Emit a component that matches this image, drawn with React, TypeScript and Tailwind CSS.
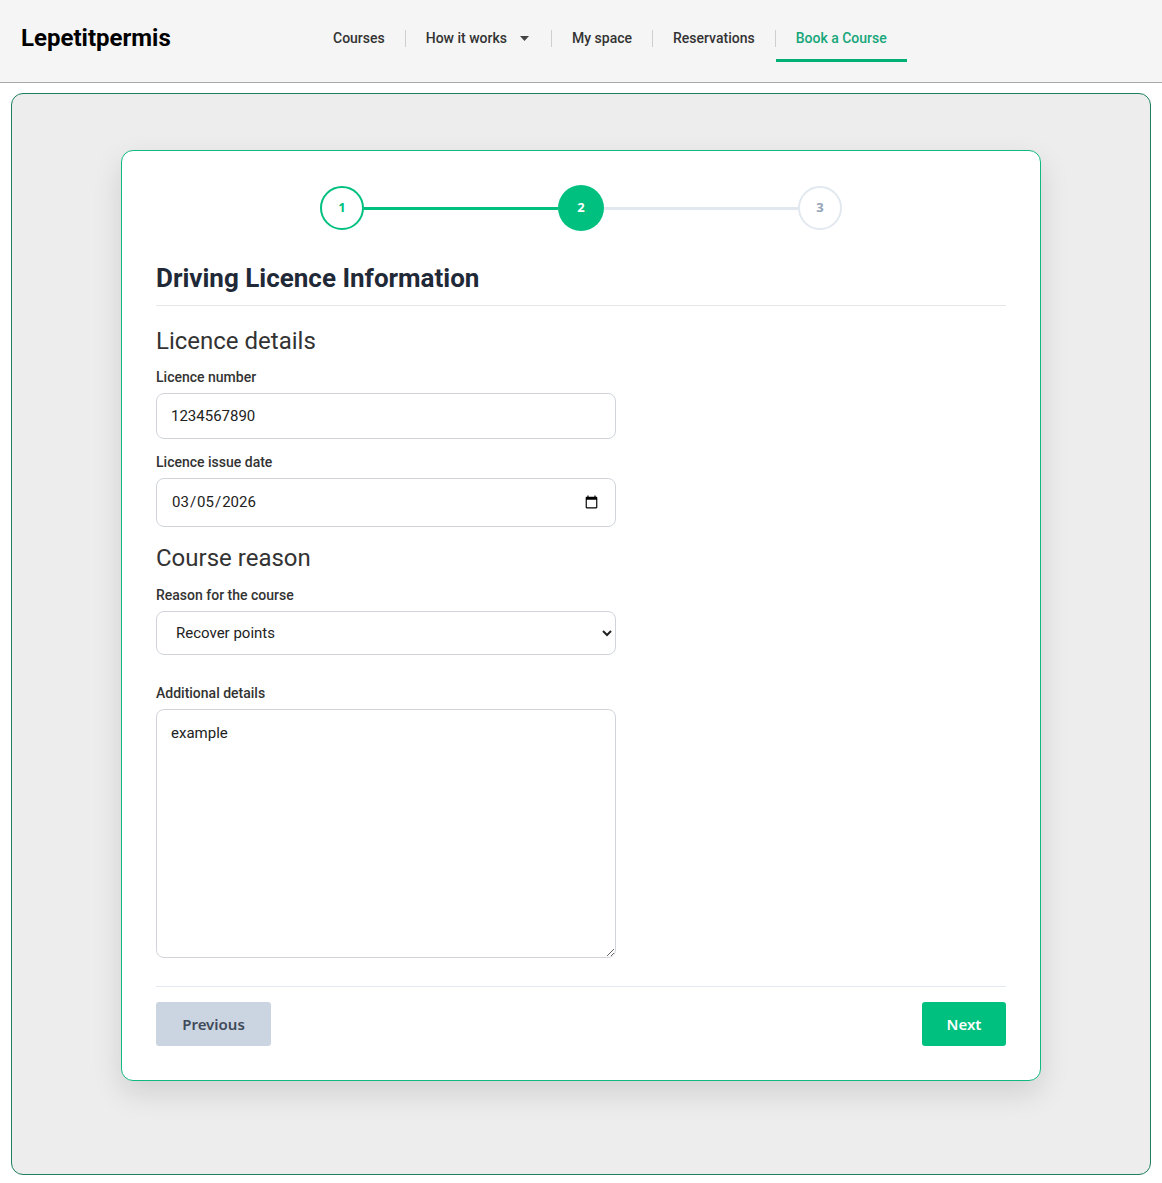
import { useState } from 'react'

const navItems = ['Courses', 'How it works', 'My space', 'Reservations']

function Stepper() {
  return (
    <div className="flex items-center justify-center">
      <div className="flex h-[44px] w-[44px] items-center justify-center rounded-full border-2 border-[#00c07f] bg-white font-['Noto_Sans',sans-serif] text-[13px] font-bold text-[#00c07f]">
        1
      </div>
      <div className="h-[3px] w-[194px] bg-[#00c07f]" />
      <div className="flex h-[46px] w-[46px] items-center justify-center rounded-full bg-[#00c07f] font-['Noto_Sans',sans-serif] text-[13px] font-bold text-white">
        2
      </div>
      <div className="h-[3px] w-[194px] bg-[#e2e8f0]" />
      <div className="flex h-[44px] w-[44px] items-center justify-center rounded-full border-2 border-[#e2e8f0] bg-white font-['Noto_Sans',sans-serif] text-[13px] font-bold text-[#94a3b8]">
        3
      </div>
    </div>
  )
}

export default function App() {
  const [form, setForm] = useState({
    number: '1234567890',
    date: '2026-03-05',
    reason: 'recover',
    details: 'example'
  })

  const inputCls =
    'w-full rounded-lg border border-[#d1d5db] bg-white px-[14px] text-[15px] text-[#222] focus:outline-none'
  const labelCls = 'block text-[14px] font-medium leading-[17px] text-[#333]'

  return (
    <div className="min-h-screen bg-white font-['Roboto',sans-serif]">
      {/* Header */}
      <header className="flex h-[83px] items-start border-b border-[#a8a8a8] bg-[#f5f5f5] pl-[21px] pt-[24px]">
        <div className="w-[292px] text-[24px] font-bold leading-[28px] text-black">Lepetitpermis</div>
        <nav className="flex items-start pt-[6px]">
          {navItems.map((item) => (
            <div key={item} className="flex items-center">
              <span className="flex items-center px-[20px] text-[14px] font-medium leading-[17px] text-[#333]">
                {item}
                {item === 'How it works' && (
                  <svg className="ml-[13px] mr-[2px]" width="9" height="5" viewBox="0 0 9 5">
                    <path d="M0 0h9L4.5 5z" fill="#444" />
                  </svg>
                )}
              </span>
              <span className="h-[17px] w-px bg-[#cfcfcf]" />
            </div>
          ))}
          <span className="border-b-[3px] border-[#00b074] px-[20px] pb-[12px] text-[14px] font-medium leading-[17px] text-[#16a67a]">
            Book a Course
          </span>
        </nav>
      </header>

      {/* Main */}
      <main className="px-[11px] pb-[7px] pt-[10px]">
        <div className="rounded-[12px] border border-[#1f7f5a] bg-[#ededed] px-[109px] pb-[93px] pt-[56px]">
          <div className="rounded-[12px] border border-[#10b981] bg-white px-[34px] pb-[34px] pt-[34px] shadow-[0_12px_30px_rgba(0,0,0,0.12)]">
            <Stepper />

            <h1 className="mt-[32px] border-b border-[#e5e7eb] pb-[11px] text-[26px] font-bold leading-[31px] text-[#1f2937]">
              Driving Licence Information
            </h1>

            <h2 className="mt-[21px] text-[24px] font-normal leading-[29px] text-[#333]">Licence details</h2>

            <label className={`${labelCls} mt-[13px]`}>Licence number</label>
            <input
              className={`${inputCls} mt-[7px] h-[46px] max-w-[460px]`}
              value={form.number}
              onChange={(e) => setForm({ ...form, number: e.target.value })}
            />

            <label className={`${labelCls} mt-[15px]`}>Licence issue date</label>
            <input
              type="date"
              className={`${inputCls} mt-[7px] h-[49px] max-w-[460px]`}
              value={form.date}
              onChange={(e) => setForm({ ...form, date: e.target.value })}
            />

            <h2 className="mt-[17px] text-[24px] font-normal leading-[29px] text-[#333]">Course reason</h2>

            <label className={`${labelCls} mt-[14px]`}>Reason for the course</label>
            <select
              className={`${inputCls} mt-[7px] h-[44px] max-w-[460px] pl-[15px]`}
              value={form.reason}
              onChange={(e) => setForm({ ...form, reason: e.target.value })}
            >
              <option value="recover">Recover points</option>
              <option value="probation">Probationary licence</option>
              <option value="court">Court order</option>
            </select>

            <label className={`${labelCls} mt-[30px]`}>Additional details</label>
            <textarea
              className={`${inputCls} mt-[7px] block h-[249px] max-w-[460px] py-[12px]`}
              value={form.details}
              onChange={(e) => setForm({ ...form, details: e.target.value })}
            />

            <div className="mt-[28px] flex items-center justify-between border-t border-[#e2e8f0] pt-[15px]">
              <button className="h-[44px] w-[115px] rounded-[3px] bg-[#cbd5e1] font-['Noto_Sans',sans-serif] text-[15px] font-semibold text-[#3f4a5a]">
                Previous
              </button>
              <button className="h-[44px] w-[84px] rounded-[3px] bg-[#00c07f] font-['Noto_Sans',sans-serif] text-[15px] font-semibold text-white">
                Next
              </button>
            </div>
          </div>
        </div>
      </main>
    </div>
  )
}
